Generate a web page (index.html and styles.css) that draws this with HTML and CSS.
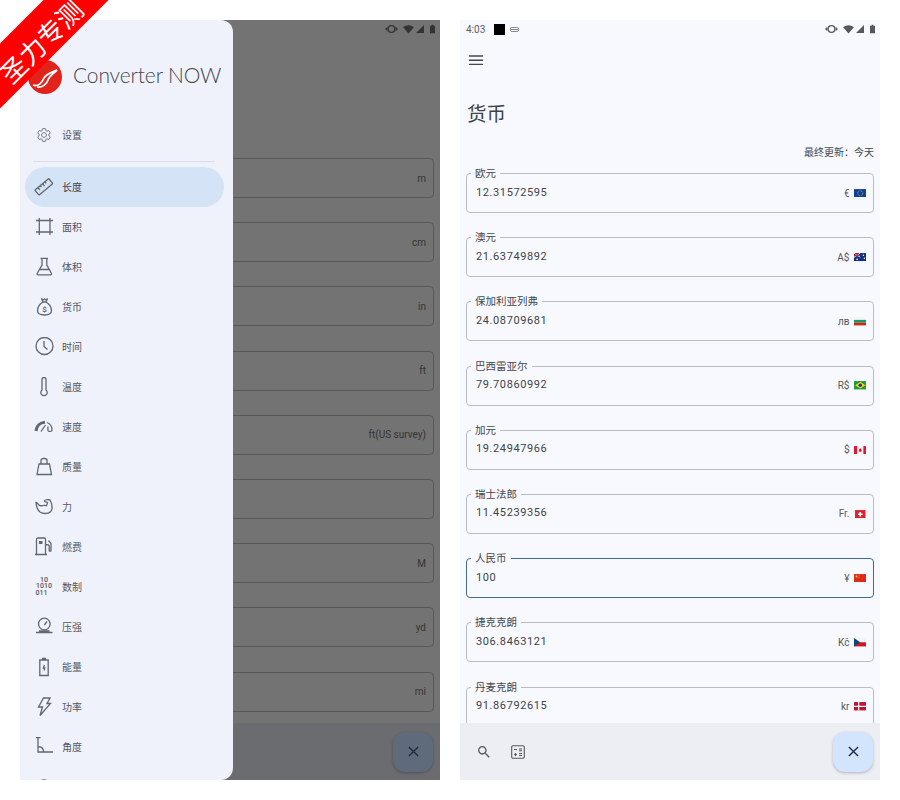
FILE: index.html
```html
<!DOCTYPE html>
<html lang="zh">
<head>
<meta charset="UTF-8">
<title>Converter NOW</title>
<link rel="stylesheet" href="styles.css">
</head>
<body>
<div class="ribbon"><span>圣力专测</span></div>
<div class="stage">

    <!-- left shot: drawer open over the length page -->
    <section class="phone phone-dim">
        <div class="status-bar">
            <div class="status-left"></div>
            <div class="status-right">
                <svg class="st-icon" viewBox="0 0 14 10"><path class="st-fill" d="M0 5 2.5 2.5V7.500zM14 5 11.500 2.500V7.500z"/><circle class="st-line" cx="7" cy="5" r="3.600"/></svg>
                <svg class="st-wifi" viewBox="0 0 12 10"><path class="st-fill" d="M0 2.500C3.500-.5 8.500-.5 12 2.500L6 9.500z"/></svg>
                <svg class="st-signal" viewBox="0 0 9 9"><path class="st-fill" d="M9 0V9H0z"/></svg>
                <svg class="st-batt" viewBox="0 0 6 10"><path class="st-fill" d="M2 0h2v1h2v9H0V1h2z"/></svg>
            </div>
        </div>
        <div class="list list-dim">
            <div class="field"><span class="unit">m</span></div>
            <div class="field"><span class="unit">cm</span></div>
            <div class="field"><span class="unit">in</span></div>
            <div class="field"><span class="unit">ft</span></div>
            <div class="field"><span class="unit">ft(US survey)</span></div>
            <div class="field"></div>
            <div class="field"><span class="unit">M</span></div>
            <div class="field"><span class="unit">yd</span></div>
            <div class="field"><span class="unit">mi</span></div>
        </div>
        <div class="bottom-bar">
            <div class="fab fab-dim"><svg class="fab-x" viewBox="0 0 12 12"><path d="M1 1 11 11M11 1 1 11"/></svg></div>
        </div>

        <nav class="drawer">
            <div class="brand">
                <svg class="brand-logo" viewBox="0 0 34 34">
                    <circle cx="17" cy="17" r="17" fill="#e2231a"/>
                    <path d="M5 25C10 27 14 23 16 18 18 14 22 13 29 10 25 14 21 16 20 20 19 24 14 28 9 27" fill="none" stroke="#fff" stroke-width="1.800"/>
                </svg>
                <span class="brand-name">Converter NOW</span>
            </div>
            <a class="nav-item">
                <svg class="icon" viewBox="-3 -3 30 30"><path d="M19.140 12.940c.04-.3.06-.61.06-.94 0-.32-.02-.64-.07-.94l2.030-1.580c.18-.14.23-.41.12-.61l-1.920-3.320c-.12-.22-.37-.29-.59-.22l-2.390.96c-.5-.38-1.030-.7-1.620-.94l-.36-2.540c-.04-.24-.24-.41-.48-.41h-3.840c-.24 0-.43.17-.47.41l-.36 2.540c-.59.24-1.130.57-1.620.94l-2.390-.96c-.22-.08-.47 0-.59.22L2.740 8.870c-.12.21-.08.47.12.61l2.030 1.580c-.05.3-.09.63-.09.94s.02.64.07.94l-2.030 1.580c-.18.14-.23.41-.12.61l1.920 3.320c.12.22.37.29.59.22l2.390-.96c.5.38 1.030.7 1.620.94l.36 2.540c.05.24.24.41.48.41h3.840c.24 0 .44-.17.47-.41l.36-2.540c.59-.24 1.130-.56 1.620-.94l2.390.96c.22.08.47 0 .59-.22l1.920-3.320c.12-.22.07-.47-.12-.61zM12 15.600c-1.980 0-3.600-1.620-3.600-3.600s1.620-3.600 3.600-3.600 3.600 1.620 3.600 3.600-1.620 3.600-3.600 3.600z"/></svg>
                <span>设置</span>
            </a>
            <div class="nav-divider"></div>
            <a class="nav-item active">
                <svg class="icon" viewBox="0 0 20 20"><g transform="rotate(-40 10 10)"><rect x="1" y="6.500" width="18" height="6.500" rx=".6"/><path d="M5 6.500v3M8 6.500v2M11 6.500v3M14 6.500v2"/></g></svg>
                <span>长度</span>
            </a>
            <a class="nav-item">
                <svg class="icon" viewBox="0 0 20 20"><path d="M5.300 1v17M16 1v17M2 3.500h17M2 15h17"/></svg>
                <span>面积</span>
            </a>
            <a class="nav-item">
                <svg class="icon" viewBox="0 0 20 20"><path d="M6.500 1.300h7.500M8 1.300V8L3.300 16.300c-.4.8 0 1.500.9 1.500h12.300c.9 0 1.300-.7.9-1.500L12.800 8V1.300M6 12.500h8.800"/></svg>
                <span>体积</span>
            </a>
            <a class="nav-item">
                <svg class="icon" viewBox="0 0 20 20">
                    <path d="M7.500 1.500 9 3l1.500-1 1.500 1 1.500-1.500-1.500 3.500H9zM9 5c-3 2-5.500 5-5.500 8.500 0 3 2.500 4.500 7 4.500s7-1.500 7-4.500C17.500 10 15 7 12 5"/>
                    <text class="icon-text" x="10.500" y="15" text-anchor="middle" font-size="8">$</text>
                </svg>
                <span>货币</span>
            </a>
            <a class="nav-item">
                <svg class="icon" viewBox="0 0 20 20"><circle cx="10.500" cy="9" r="8.500"/><path d="M10 4v5.500l3.500 3"/></svg>
                <span>时间</span>
            </a>
            <a class="nav-item">
                <svg class="icon" viewBox="0 0 20 20"><path d="M8 2.500a2 2 0 0 1 4 0V13a3.200 3.200 0 1 1-4 0z"/></svg>
                <span>温度</span>
            </a>
            <a class="nav-item">
                <svg class="icon" viewBox="0 0 20 20"><path class="thick" d="M2 14C2.500 9 6 5.500 11 5.200"/><path d="M7 14.500 11.500 8"/><path d="M13 5.500c3 1 5 4.500 5 8 0 1-3.500 1.500-4 0-.3-1 0-2.500 0-4"/></svg>
                <span>速度</span>
            </a>
            <a class="nav-item">
                <svg class="icon" viewBox="0 0 20 20"><path d="M7 7V3.500C7 2 8 1.500 9.500 1.500h1C12 1.500 13 2 13 3.500V7M5 7h10.500l2 10.500H3z"/></svg>
                <span>质量</span>
            </a>
            <a class="nav-item">
                <svg class="icon" viewBox="0 0 20 20"><path d="M2 5.500C2.500 12 5 16.500 11 16.500c5 0 7.500-2.500 7-7-.2-2.500-1-5-2-6.500-2-.5-5-.3-5.500.7-.2.5.5 1.500 2 1.500l1 .5-1 3C9 7.500 7 10 5 8 4 7 3.500 5.500 2 5.500z"/></svg>
                <span>力</span>
            </a>
            <a class="nav-item">
                <svg class="icon" viewBox="0 0 20 20"><path d="M2.500 17.500V2.500C2.500 1.500 3 1 4 1h6c1 0 1.500.5 1.500 1.500v15M1 17.500h12M14.500 3.500l2.500 3v7c0 1-1.800 1-1.800 0V9c0-1-1-1.500-3.700-1.500"/><rect class="solid" x="5" y="4" width="3.500" height="3"/></svg>
                <span>燃费</span>
            </a>
            <a class="nav-item">
                <svg class="icon" viewBox="0 0 20 20">
                    <text class="icon-text" x="10" y="4.500" text-anchor="middle" font-size="7">10</text>
                    <text class="icon-text" x="10" y="11" text-anchor="middle" font-size="7">1010</text>
                    <text class="icon-text" x="7.500" y="17.500" text-anchor="middle" font-size="7">011</text>
                </svg>
                <span>数制</span>
            </a>
            <a class="nav-item">
                <svg class="icon" viewBox="0 0 20 20"><circle cx="10.300" cy="7" r="5.800"/><path d="M10.300 8 13 4.500"/><path d="M5 14h10.500M2 15.500h16.500"/></svg>
                <span>压强</span>
            </a>
            <a class="nav-item">
                <svg class="icon" viewBox="0 0 20 20"><path d="M8 1.500h4M5.800 3h8.400v15.500H5.800z"/><path d="M10.500 8 9.300 11h1.500l-.8 2.500"/></svg>
                <span>能量</span>
            </a>
            <a class="nav-item">
                <svg class="icon" viewBox="0 0 20 20"><path d="M9.500 1h6.500l-3 5.500h3.500L6 18.500 8.500 10H4.500z"/></svg>
                <span>功率</span>
            </a>
            <a class="nav-item">
                <svg class="icon" viewBox="0 0 20 20"><path d="M2 .5h4.500M4 .5V15h15M4 9.500c3.500 0 5.500 2.500 5.800 5.500"/></svg>
                <span>角度</span>
            </a>
            <a class="nav-item">
                <svg class="icon" viewBox="0 0 20 20"><circle cx="10" cy="10" r="7"/></svg>
            </a>
        </nav>
    </section>

    <!-- right shot: currency page -->
    <section class="phone">
        <div class="status-bar">
            <div class="status-left">
                <span class="clock">4:03</span>
                <span class="notif-square"></span>
                <svg class="notif-mini" viewBox="0 0 9 5"><path d="M2.200.5h4.600a2 2 0 0 1 0 4H2.200a2 2 0 0 1 0-4zM1 2.500h7"/></svg>
            </div>
            <div class="status-right">
                <svg class="st-icon" viewBox="0 0 14 10"><path class="st-fill" d="M0 5 2.5 2.5V7.500zM14 5 11.500 2.500V7.500z"/><circle class="st-line" cx="7" cy="5" r="3.600"/></svg>
                <svg class="st-wifi" viewBox="0 0 12 10"><path class="st-fill" d="M0 2.500C3.500-.5 8.500-.5 12 2.500L6 9.500z"/></svg>
                <svg class="st-signal" viewBox="0 0 9 9"><path class="st-fill" d="M9 0V9H0z"/></svg>
                <svg class="st-batt" viewBox="0 0 6 10"><path class="st-fill" d="M2 0h2v1h2v9H0V1h2z"/></svg>
            </div>
        </div>
        <div class="toolbar">
            <svg class="menu-icon" viewBox="0 0 14 10"><path d="M0 1h14M0 5.300h14M0 9.500h14"/></svg>
        </div>
        <h1 class="page-title">货币</h1>
        <div class="updated">最终更新：今天</div>
        <div class="list">
            <div class="field">
                <label class="field-label">欧元</label>
                <span class="value">12.31572595</span>
                <span class="unit">€</span>
                <svg class="flag" viewBox="0 0 12 8"><rect width="12" height="8" fill="#0f3f9c"/><circle cx="6" cy="4" r="2.400" fill="none" stroke="#e8cf3a" stroke-width=".7" stroke-dasharray=".7 .6"/></svg>
            </div>
            <div class="field">
                <label class="field-label">澳元</label>
                <span class="value">21.63749892</span>
                <span class="unit">A$</span>
                <svg class="flag" viewBox="0 0 12 8"><rect width="12" height="8" fill="#10307f"/><path d="M0 0 6 4M6 0 0 4" stroke="#fff" stroke-width=".8"/><path d="M3 0v4M0 2h6" stroke="#d8232a" stroke-width="1"/><circle cx="9" cy="2" r=".7" fill="#fff"/><circle cx="10" cy="5" r=".7" fill="#fff"/><circle cx="3" cy="6" r=".8" fill="#fff"/></svg>
            </div>
            <div class="field">
                <label class="field-label">保加利亚列弗</label>
                <span class="value">24.08709681</span>
                <span class="unit">лв</span>
                <svg class="flag" viewBox="0 0 12 8"><rect width="12" height="3" fill="#f4f4f4"/><rect y="2.700" width="12" height="2.700" fill="#169a6b"/><rect y="5.400" width="12" height="2.600" fill="#d62612"/></svg>
            </div>
            <div class="field">
                <label class="field-label">巴西雷亚尔</label>
                <span class="value">79.70860992</span>
                <span class="unit">R$</span>
                <svg class="flag" viewBox="0 0 12 8"><rect width="12" height="8" fill="#1f9a3c"/><path d="M6 .8 11 4 6 7.200 1 4z" fill="#f2d516"/><circle cx="6" cy="4" r="1.700" fill="#1b3f8f"/></svg>
            </div>
            <div class="field">
                <label class="field-label">加元</label>
                <span class="value">19.24947966</span>
                <span class="unit">$</span>
                <svg class="flag" viewBox="0 0 12 8"><rect width="12" height="8" fill="#f4f4f4"/><rect width="3" height="8" fill="#e0182d"/><rect x="9" width="3" height="8" fill="#e0182d"/><path d="M6 1.800 7.500 4 7 5.500H5L4.500 4z" fill="#e0182d"/></svg>
            </div>
            <div class="field">
                <label class="field-label">瑞士法郎</label>
                <span class="value">11.45239356</span>
                <span class="unit">Fr.</span>
                <svg class="flag" viewBox="0 0 12 8"><rect x="1" width="10" height="8" fill="#e0202c"/><path d="M6 1.800v4.400M3.800 4h4.400" stroke="#fff" stroke-width="1.500"/></svg>
            </div>
            <div class="field field-focus">
                <label class="field-label">人民币</label>
                <span class="value">100</span>
                <span class="unit">¥</span>
                <svg class="flag" viewBox="0 0 12 8"><rect width="12" height="8" fill="#de2a1c"/><circle cx="2.500" cy="2.300" r="1" fill="#f4d21c"/><circle cx="4.800" cy="1.300" r=".4" fill="#f4d21c"/><circle cx="4.800" cy="3.300" r=".4" fill="#f4d21c"/></svg>
            </div>
            <div class="field">
                <label class="field-label">捷克克朗</label>
                <span class="value">306.8463121</span>
                <span class="unit">Kč</span>
                <svg class="flag" viewBox="0 0 12 8"><rect width="12" height="4" fill="#f4f4f4"/><rect y="4" width="12" height="4" fill="#d7141a"/><path d="M0 0 6 4 0 8z" fill="#11457e"/></svg>
            </div>
            <div class="field">
                <label class="field-label">丹麦克朗</label>
                <span class="value">91.86792615</span>
                <span class="unit">kr</span>
                <svg class="flag" viewBox="0 0 12 8"><rect width="12" height="8" fill="#c8102e"/><path d="M4.500 0v8M0 4h12" stroke="#fff" stroke-width="1.200"/></svg>
            </div>
        </div>
        <div class="bottom-bar">
            <svg class="bar-icon bar-search" viewBox="0 0 24 24"><path d="M15.500 14h-.79l-.28-.27C15.410 12.590 16 11.110 16 9.500 16 5.910 13.090 3 9.500 3S3 5.910 3 9.500 5.910 16 9.500 16c1.610 0 3.090-.59 4.230-1.570l.27.28v.79l5 4.990L20.490 19l-4.990-5zm-6 0C7.010 14 5 11.990 5 9.500S7.010 5 9.500 5 14 7.010 14 9.500 11.990 14 9.500 14z"/></svg>
            <svg class="bar-calc" viewBox="0 0 14 14"><rect x=".7" y=".7" width="12.600" height="12.600" rx="1.200"/><path d="M3 4.500h3M8 4h3M8 5.700h3M3 9.500h3M4.500 8v3M8 8.500l3 0M8 10.500h3"/></svg>
            <div class="fab"><svg class="fab-x" viewBox="0 0 12 12"><path d="M1 1 11 11M11 1 1 11"/></svg></div>
        </div>
    </section>
</div>
</body>
</html>
```

FILE: styles.css
```css
:root {
    --ink: #44474e;
    --line: #b9bcc3;
    --surface: #f8f9ff;
    --drawer: #f0f2fb;
}
body {
    margin: 0;
    background-color: #fff;
    font-family: Roboto, "Noto Sans CJK SC", sans-serif;
    color: var(--ink);
    overflow: hidden;
}
.stage {
    display: flex;
    gap: 20px;
    padding: 20px;
}
.phone {
    position: relative;
    display: flex;
    flex-direction: column;
    width: 420px;
    height: 760px;
    overflow: hidden;
    background-color: var(--surface);
}
.phone-dim {
    background-color: #737373;
}

/* status bar */
.status-bar {
    display: flex;
    justify-content: space-between;
    align-items: center;
    flex: none;
    height: 18px;
    padding: 0 5px 0 6px;
}
.status-left, .status-right {
    display: flex;
    align-items: center;
}
.clock {
    font-size: 10px;
    color: #5b5e64;
}
.notif-square {
    width: 11px;
    height: 11px;
    margin-left: 9px;
    background-color: #000;
}
.notif-mini {
    width: 9px;
    height: 5px;
    margin-left: 5px;
    fill: none;
    stroke: #666;
    stroke-width: 0.8;
}
.st-icon {
    width: 13px;
    height: 10px;
}
.st-wifi {
    width: 11px;
    height: 9px;
    margin-left: 5px;
}
.st-signal {
    width: 8px;
    height: 8px;
    margin-left: 2px;
}
.st-batt {
    width: 5px;
    height: 10px;
    margin-left: 6px;
}
.st-fill {
    fill: #55585e;
}
.st-line {
    fill: none;
    stroke: #55585e;
    stroke-width: 1.5;
}
.phone-dim .st-fill {
    fill: #333;
}
.phone-dim .st-line {
    stroke: #333;
}

/* currency page head */
.toolbar {
    display: flex;
    align-items: center;
    flex: none;
    height: 44px;
    padding-left: 9px;
}
.menu-icon {
    width: 14px;
    height: 10px;
    fill: none;
    stroke: #44474e;
    stroke-width: 1.5;
}
.page-title {
    flex: none;
    height: 28px;
    margin: 19px 0 0 7px;
    font-size: 19.5px;
    font-weight: 400;
    line-height: 28px;
    color: #3e4147;
}
.updated {
    flex: none;
    height: 14px;
    margin: 17px 0 6px;
    padding-right: 6px;
    font-size: 10px;
    line-height: 14px;
    text-align: right;
}

/* fields */
.list {
    display: flex;
    flex-direction: column;
    gap: 24.2px;
    flex: 1;
    min-height: 0;
    overflow: hidden;
    padding: 7px 6px 0;
}
.list-dim {
    margin-top: 113px;
}
.field {
    position: relative;
    display: flex;
    align-items: center;
    flex: none;
    box-sizing: border-box;
    height: 40px;
    padding: 0 7px 0 9px;
    border: 1px solid var(--line);
    border-radius: 4px;
}
.list-dim .field {
    justify-content: flex-end;
    border-color: #585858;
}
.field-focus {
    border: 1.5px solid #3f6a94;
}
.field-label {
    position: absolute;
    top: -6px;
    left: 4px;
    padding: 0 4px;
    background-color: var(--surface);
    font-size: 10.5px;
    line-height: 12px;
}
.value {
    flex: 1;
    margin-bottom: 2px;
    font-size: 11px;
    letter-spacing: 0.6px;
    color: #3f4248;
}
.unit {
    font-size: 10px;
    color: #55585e;
}
.list-dim .unit {
    color: #333;
}
.flag {
    width: 12.5px;
    height: 8.5px;
    margin-left: 4px;
}

/* bottom bar */
.bottom-bar {
    display: flex;
    align-items: center;
    flex: none;
    height: 57px;
    padding: 0 7px 0 16px;
    background-color: #eceef3;
}
.phone-dim .bottom-bar {
    justify-content: flex-end;
    background-color: #6b6c6f;
}
.bar-icon {
    width: 16px;
    height: 16px;
    fill: #55585e;
}
.bar-calc {
    width: 14px;
    height: 14px;
    margin-left: 19px;
    fill: none;
    stroke: #55585e;
    stroke-width: 1.100;
}
.fab {
    display: flex;
    align-items: center;
    justify-content: center;
    width: 40px;
    height: 40px;
    margin-left: auto;
    border-radius: 12px;
    background-color: #d3e4fd;
    box-shadow: 0 1px 3px rgba(0, 0, 0, 0.25);
}
.fab-dim {
    background-color: #5f6a7b;
}
.fab-x {
    width: 11px;
    height: 11px;
    fill: none;
    stroke: #1c2b40;
    stroke-width: 1.500;
}

/* drawer */
.drawer {
    position: absolute;
    top: 0;
    left: 0;
    bottom: 0;
    width: 213px;
    overflow: hidden;
    border-radius: 0 12px 12px 0;
    background-color: var(--drawer);
}
.brand {
    display: flex;
    align-items: center;
    gap: 11px;
    height: 95px;
    padding: 18px 0 0 8px;
    box-sizing: border-box;
}
.brand-logo {
    flex: none;
    width: 34px;
    height: 34px;
}
.brand-name {
    margin-bottom: 4px;
    font-family: Lato, sans-serif;
    font-size: 21px;
    font-weight: 300;
    letter-spacing: -0.15px;
    white-space: nowrap;
    color: #44474e;
}
.nav-item {
    display: flex;
    align-items: center;
    gap: 8px;
    height: 40px;
    margin: 0 9px 0 5px;
    padding-left: 9px;
    border-radius: 20px;
    font-size: 10px;
    color: #55585e;
}
.nav-item span {
    margin-bottom: 2px;
}
.nav-item.active {
    background-color: #d5e3f6;
    color: #3f4248;
}
.nav-divider {
    height: 1px;
    margin: 6px 18px 5px 13px;
    background-color: #dcdde6;
}
.icon {
    flex: none;
    width: 20px;
    height: 20px;
    fill: none;
    stroke: #63666c;
    stroke-width: 1.300;
}
.icon .thick {
    stroke-width: 3;
}
.icon .solid {
    fill: #63666c;
    stroke: none;
}
.icon-text {
    fill: #55585e;
    stroke: none;
    font-family: Roboto, sans-serif;
    font-weight: 500;
}

/* promo ribbon across the corner */
.ribbon {
    position: absolute;
    top: 15px;
    left: -62px;
    z-index: 5;
    display: flex;
    align-items: center;
    justify-content: center;
    box-sizing: border-box;
    width: 200px;
    height: 46px;
    padding-top: 8px;
    background-color: #f00;
    color: #fff;
    font-family: "Noto Sans CJK SC", sans-serif;
    font-size: 26px;
    line-height: 1;
    transform: rotate(-45deg);
}
```
